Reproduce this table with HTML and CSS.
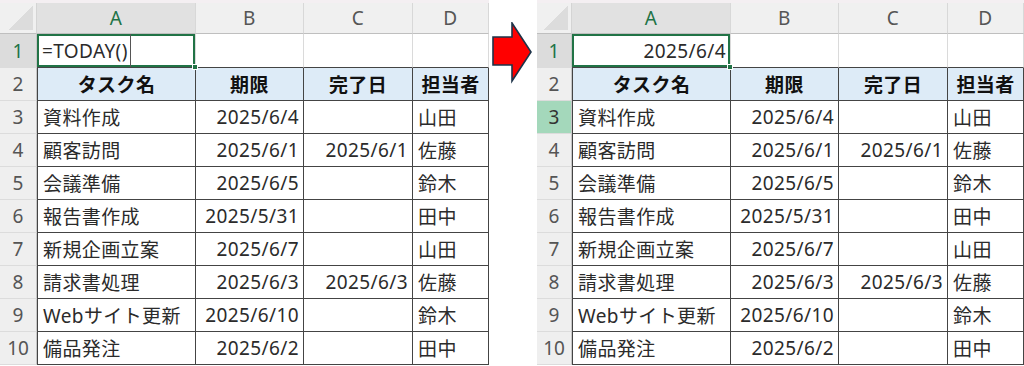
FILE: index.html
```html
<!DOCTYPE html>
<html lang="ja">
<head>
  <meta charset="UTF-8">
  <title>TODAY関数</title>
  <link rel="stylesheet" href="styles.css">
</head>
<body>

  <div class="page">

    <!-- before: formula being typed -->
    <div class="sheet sheet-left">
      <div class="strip"></div>
      <div class="grid">
        <div class="corner"></div>
        <div class="col sel">A</div>
        <div class="col">B</div>
        <div class="col">C</div>
        <div class="col">D</div>

        <div class="rn sel">1</div>
        <div class="c active"><span class="editing">=TODAY()</span><i class="handle"></i></div>
        <div class="c"></div>
        <div class="c"></div>
        <div class="c"></div>

        <div class="rn">2</div>
        <div class="th first">タスク名</div>
        <div class="th">期限</div>
        <div class="th">完了日</div>
        <div class="th">担当者</div>

        <div class="rn">3</div>
        <div class="td first">資料作成</div>
        <div class="td num">2025/6/4</div>
        <div class="td num"></div>
        <div class="td">山田</div>

        <div class="rn">4</div>
        <div class="td first">顧客訪問</div>
        <div class="td num">2025/6/1</div>
        <div class="td num">2025/6/1</div>
        <div class="td">佐藤</div>

        <div class="rn">5</div>
        <div class="td first">会議準備</div>
        <div class="td num">2025/6/5</div>
        <div class="td num"></div>
        <div class="td">鈴木</div>

        <div class="rn">6</div>
        <div class="td first">報告書作成</div>
        <div class="td num">2025/5/31</div>
        <div class="td num"></div>
        <div class="td">田中</div>

        <div class="rn">7</div>
        <div class="td first">新規企画立案</div>
        <div class="td num">2025/6/7</div>
        <div class="td num"></div>
        <div class="td">山田</div>

        <div class="rn">8</div>
        <div class="td first">請求書処理</div>
        <div class="td num">2025/6/3</div>
        <div class="td num">2025/6/3</div>
        <div class="td">佐藤</div>

        <div class="rn">9</div>
        <div class="td first">Webサイト更新</div>
        <div class="td num">2025/6/10</div>
        <div class="td num"></div>
        <div class="td">鈴木</div>

        <div class="rn">10</div>
        <div class="td first">備品発注</div>
        <div class="td num">2025/6/2</div>
        <div class="td num"></div>
        <div class="td">田中</div>
      </div>
    </div>

    <div class="arrow">
      <svg width="42" height="62" viewBox="0 0 42 62">
        <polygon points="1,15 20,15 20,1 39,30 20,59 20,43 1,43" fill="#ff0000" stroke="#1d3349" stroke-width="1.6" stroke-linejoin="miter"/>
      </svg>
    </div>

    <!-- after: result of the formula -->
    <div class="sheet sheet-right">
      <div class="strip"></div>
      <div class="grid">
        <div class="corner"></div>
        <div class="col sel">A</div>
        <div class="col">B</div>
        <div class="col">C</div>
        <div class="col">D</div>

        <div class="rn sel">1</div>
        <div class="c active num">2025/6/4<i class="handle"></i></div>
        <div class="c"></div>
        <div class="c"></div>
        <div class="c"></div>

        <div class="rn">2</div>
        <div class="th first">タスク名</div>
        <div class="th">期限</div>
        <div class="th">完了日</div>
        <div class="th">担当者</div>

        <div class="rn hl">3</div>
        <div class="td first">資料作成</div>
        <div class="td num">2025/6/4</div>
        <div class="td num"></div>
        <div class="td">山田</div>

        <div class="rn">4</div>
        <div class="td first">顧客訪問</div>
        <div class="td num">2025/6/1</div>
        <div class="td num">2025/6/1</div>
        <div class="td">佐藤</div>

        <div class="rn">5</div>
        <div class="td first">会議準備</div>
        <div class="td num">2025/6/5</div>
        <div class="td num"></div>
        <div class="td">鈴木</div>

        <div class="rn">6</div>
        <div class="td first">報告書作成</div>
        <div class="td num">2025/5/31</div>
        <div class="td num"></div>
        <div class="td">田中</div>

        <div class="rn">7</div>
        <div class="td first">新規企画立案</div>
        <div class="td num">2025/6/7</div>
        <div class="td num"></div>
        <div class="td">山田</div>

        <div class="rn">8</div>
        <div class="td first">請求書処理</div>
        <div class="td num">2025/6/3</div>
        <div class="td num">2025/6/3</div>
        <div class="td">佐藤</div>

        <div class="rn">9</div>
        <div class="td first">Webサイト更新</div>
        <div class="td num">2025/6/10</div>
        <div class="td num"></div>
        <div class="td">鈴木</div>

        <div class="rn">10</div>
        <div class="td first">備品発注</div>
        <div class="td num">2025/6/2</div>
        <div class="td num"></div>
        <div class="td">田中</div>
      </div>
    </div>

  </div>

</body>
</html>
```

FILE: styles.css
```css
* {
  box-sizing: border-box;
  margin: 0;
  padding: 0;
}

body {
  background: #fff;
  font-family: 'Noto Sans', 'Noto Sans CJK JP', sans-serif;
  font-size: 19px;
  letter-spacing: 0.4px;
  color: #2b2b2b;
  overflow: hidden;
}

.page {
  display: flex;
  align-items: flex-start;
  height: 366px;
}

.sheet-left {
  width: 489px;
}

.sheet-right {
  width: 487px;
}

.strip {
  height: 3px;
  background: #f4eff2;
}

.grid {
  display: grid;
  grid-template-rows: 31px 34px repeat(9, 33px);
}

.sheet-left .grid {
  grid-template-columns: 37px 159px 108px 109px 76px;
}

.sheet-right .grid {
  grid-template-columns: 35px 159px 108px 109px 76px;
}

.grid > div {
  display: flex;
  align-items: center;
  white-space: nowrap;
  position: relative;
}

/* headers */
.corner {
  background: linear-gradient(135deg, #f0f0f0 0 50%, #dcdcdc 50% 100%);
  background-size: 24px 24px;
  background-position: right 3px bottom 3px;
  background-repeat: no-repeat;
  background-color: #f0f0f0;
  border-right: 1px solid #d4d4d4;
  border-bottom: 1px solid #bfbfbf;
}

.col {
  justify-content: center;
  background: #f0f0f0;
  color: #555;
  border-right: 1px solid #d8d8d8;
  border-bottom: 1px solid #bfbfbf;
}

.col.sel {
  background: #e1e1e1;
  color: #217346;
}

.rn {
  justify-content: center;
  background: #efefef;
  color: #555;
  letter-spacing: 0;
  border-right: 1px solid #c6c6c6;
  border-bottom: 1px solid #dcdcdc;
}

.rn.sel {
  background: #dcdcdc;
  color: #217346;
}

.rn.hl {
  background: #a4d8bb;
  color: #333;
}

/* row 1 */
.c {
  padding: 0 4px;
  border-right: 1px solid #dadada;
  border-bottom: 1px solid #444;
}

.c.active {
  box-shadow: inset 0 0 0 2px #217346;
}

.c.num {
  justify-content: flex-end;
}

.editing {
  display: flex;
  align-items: center;
  height: 100%;
  padding-right: 2px;
  border-right: 1px solid #555;
  margin-left: 1px;
}

.handle {
  position: absolute;
  right: -3px;
  bottom: -3px;
  width: 6px;
  height: 6px;
  background: #217346;
  border: 1px solid #fff;
  z-index: 2;
}

/* table */
.th,
.td {
  border-right: 1px solid #444;
  border-bottom: 1px solid #444;
}

.th {
  justify-content: center;
  background: #ddebf7;
  font-weight: 700;
  color: #111;
}

.td {
  padding: 0 4px 0 5px;
}

.first {
  border-left: 1px solid #444;
}

.td.num {
  justify-content: flex-end;
}

.arrow {
  width: 48px;
  padding: 22px 0 0 3px;
}

.arrow svg {
  display: block;
}
```
